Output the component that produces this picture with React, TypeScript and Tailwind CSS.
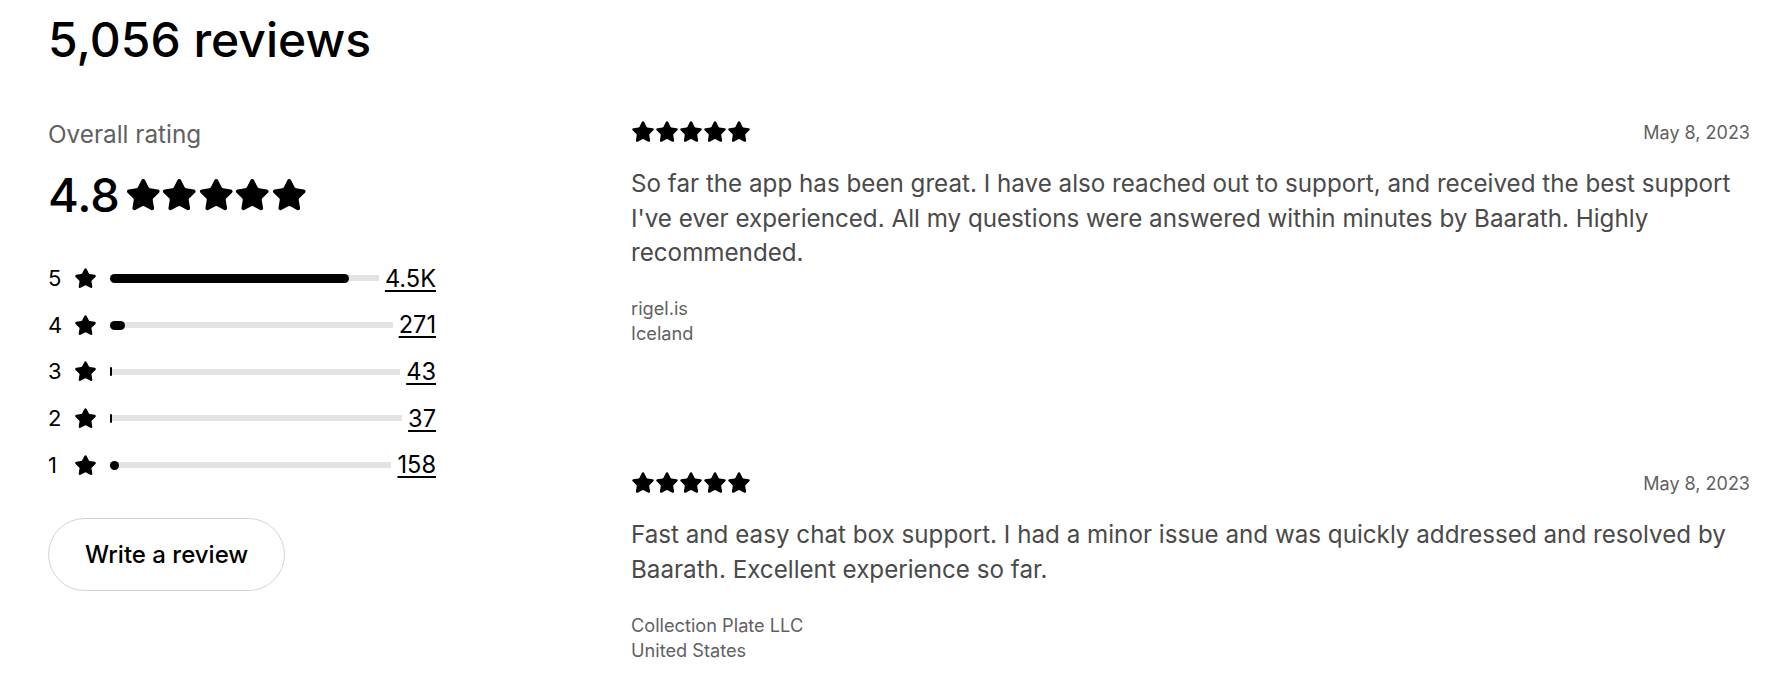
import React from 'react'
import { Star } from 'lucide-react'

const total = 5056

const breakdown = [
  { stars: 5, count: 4500, label: '4.5K' },
  { stars: 4, count: 271, label: '271' },
  { stars: 3, count: 43, label: '43' },
  { stars: 2, count: 37, label: '37' },
  { stars: 1, count: 158, label: '158' },
]

const reviews = [
  {
    date: 'May 8, 2023',
    body: "So far the app has been great. I have also reached out to support, and received the best support I've ever experienced. All my questions were answered within minutes by Baarath. Highly recommended.",
    author: 'rigel.is',
    country: 'Iceland',
  },
  {
    date: 'May 8, 2023',
    body: 'Fast and easy chat box support. I had a minor issue and was quickly addressed and resolved by Baarath. Excellent experience so far.',
    author: 'Collection Plate LLC',
    country: 'United States',
  },
]

const Stars = ({ size }: { size: number }) => (
  <div className="flex items-center">
    {[0, 1, 2, 3, 4].map((i) => (
      <Star key={i} size={size} fill="currentColor" strokeWidth={1.5} className="text-black" />
    ))}
  </div>
)

const App: React.FC = () => {
  return (
    <div className="min-h-[680px] bg-white pl-[48px] pr-[35px] pt-[11px] font-['Inter',sans-serif] text-black">
      <h2 className="text-[48px] leading-[58px] font-medium">5,056 reviews</h2>

      <div className="mt-[49px] flex">
        {/* rating summary */}
        <div className="w-[388px] shrink-0">
          <p className="text-[24.3px] leading-[32px] text-[#616161]">Overall rating</p>
          <div className="mt-[19px] flex h-[52px] items-center gap-[5px]">
            <span className="text-[47px] leading-[52px] font-medium">4.8</span>
            <Stars size={36.5} />
          </div>

          <div className="mt-[34px] flex flex-col">
            {breakdown.map((row) => (
              <div key={row.stars} className="flex h-[46.7px] items-center">
                <span className="w-[13px] text-[22px]">{row.stars}</span>
                <Star size={23} fill="currentColor" strokeWidth={1.5} className="ml-[13px] shrink-0" />
                <div className="relative ml-[13px] flex h-[9px] flex-1 items-center">
                  <div className="h-[6px] w-full bg-[#e3e3e3]" />
                  <div
                    className="absolute left-0 top-0 h-full min-w-[2px] rounded-full bg-black"
                    style={{ width: `${(row.count / total) * 100}%` }}
                  />
                </div>
                <a href="#" className="ml-[6px] text-[23.6px] underline underline-offset-[3px]">
                  {row.label}
                </a>
              </div>
            ))}
          </div>

          <button className="mt-[30px] h-[73px] rounded-full border border-[#d4d4d4] px-[36px] text-[24px] font-medium">
            Write a review
          </button>
        </div>

        {/* reviews */}
        <div className="ml-[195px] flex-1 pt-[2px]">
          {reviews.map((r, i) => (
            <div key={i} className={i > 0 ? 'mt-[125px]' : ''}>
              <div className="flex h-[24px] items-center justify-between">
                <Stars size={24} />
                <span className="text-[18px] text-[#616161]">{r.date}</span>
              </div>
              <p className="mt-[23px] text-[24.2px] leading-[34.7px] text-[#4a4a4a]">{r.body}</p>
              <div className="mt-[25px] text-[18.2px] leading-[25px] text-[#616161]">
                <p>{r.author}</p>
                <p>{r.country}</p>
              </div>
            </div>
          ))}
        </div>
      </div>
    </div>
  )
}

export default App
